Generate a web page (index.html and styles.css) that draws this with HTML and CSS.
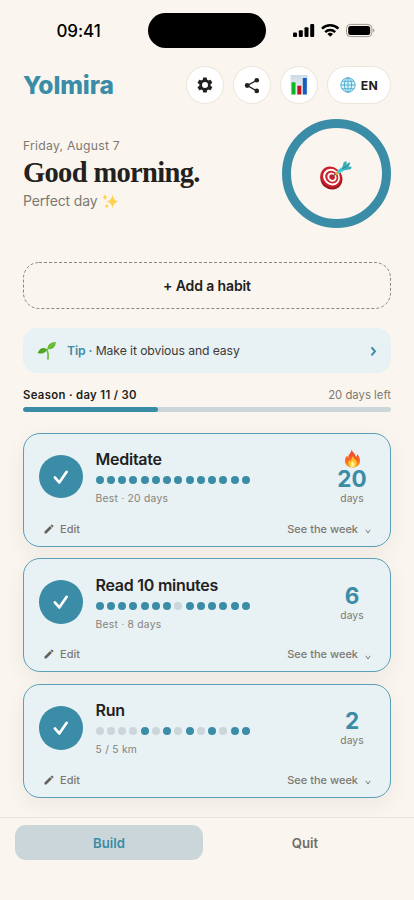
FILE: index.html
```html
<!DOCTYPE html>
<html lang="en">
<head>
<meta charset="utf-8">
<title>Yolmira</title>
<link rel="stylesheet" href="styles.css">
</head>
<body>
<svg class="defs" aria-hidden="true">
  <symbol id="check" viewBox="0 0 44 44"><path d="M16 22.700 20.500 27.800 28 17" fill="none" stroke="#fff" stroke-width="2.700" stroke-linecap="round" stroke-linejoin="round"/></symbol>
  <symbol id="pencil" viewBox="0 0 24 24"><path d="M3 17.2V21h3.8L17.8 9.9l-3.7-3.7L3 17.2zM20.7 7a1 1 0 0 0 0-1.4l-2.3-2.3a1 1 0 0 0-1.4 0l-1.8 1.8 3.7 3.7L20.7 7z" fill="currentColor"/></symbol>
  <symbol id="down" viewBox="0 0 6 5"><path d="M.8.8 3 4 5.2.8" fill="none" stroke="currentColor" stroke-width="1"/></symbol>
</svg>
<div class="status">
  <span class="time">09:41</span>
  <span class="island"></span>
  <svg class="signals" viewBox="0 0 82 16">
    <rect x="0" y="9.5" width="4" height="4.5" rx="1.1"/><rect x="5.8" y="7.2" width="4" height="6.8" rx="1.1"/><rect x="11.5" y="4.2" width="4" height="9.8" rx="1.1"/><rect x="17.2" y="1" width="4" height="13" rx="1.1"/>
    <g fill="none" stroke="#000" stroke-width="2.5"><path d="M29 5.7a11.7 11.7 0 0 1 16.4 0"/><path d="M32.2 9.1a7.2 7.2 0 0 1 10 0"/></g>
    <path d="M37.2 13.7 34.4 11a4 4 0 0 1 5.6 0z"/>
    <rect x="53.5" y="1.4" width="25.4" height="12.2" rx="4" fill="none" stroke="#999790"/>
    <rect x="55.2" y="3.1" width="22" height="8.8" rx="2.5"/><path d="M80.2 5.6c1.8.5 1.8 3.3 0 3.8z" fill="#999790"/>
  </svg>
</div>
<header class="top">
  <h1 class="brand">Yolmira</h1>
  <div class="actions">
    <button class="btn" aria-label="Settings"><svg width="18" height="18" viewBox="0 0 24 24"><path fill="#222120" fill-rule="evenodd" d="M19.4 13a7.800 7.800 0 0 0 0-2l2.100-1.600a.5.5 0 0 0 .1-.7l-2-3.400a.5.5 0 0 0-.6-.2l-2.500 1a7.300 7.300 0 0 0-1.700-1l-.4-2.600a.5.5 0 0 0-.5-.5h-4a.5.5 0 0 0-.5.5L9 5.100a7.300 7.300 0 0 0-1.700 1l-2.500-1a.5.5 0 0 0-.6.2l-2 3.400a.5.5 0 0 0 .1.700L4.500 11a7.800 7.800 0 0 0 0 2l-2.200 1.600a.5.5 0 0 0-.1.700l2 3.400c.1.200.4.300.6.200l2.500-1a7.300 7.300 0 0 0 1.700 1l.4 2.600c0 .3.200.5.500.5h4c.3 0 .5-.2.500-.5l.4-2.600a7.300 7.300 0 0 0 1.700-1l2.500 1c.2.100.5 0 .6-.2l2-3.400a.5.5 0 0 0-.1-.700zM12 16a4 4 0 1 1 0-8 4 4 0 0 1 0 8z"/></svg></button>
    <button class="btn" aria-label="Share"><svg width="16" height="17" viewBox="0 0 16 17"><path d="M13 3.200 3.300 8.500 13 14" fill="none" stroke="#222120" stroke-width="1.400"/><g fill="#222120"><circle cx="12.800" cy="3.200" r="2.300"/><circle cx="3.200" cy="8.500" r="2.400"/><circle cx="12.800" cy="13.900" r="2.300"/></g></svg></button>
    <button class="btn" aria-label="Statistics"><svg width="18" height="20" viewBox="0 0 18 20"><defs><linearGradient id="paper" x2="0" y2="1"><stop stop-color="#cbdbe8"/><stop offset="1" stop-color="#f2f5f8"/></linearGradient></defs><path d="M.5 0h17v20H.5z" fill="url(#paper)"/><path d="M.5 5h17M.5 10h17M.5 15h17M6 0v20M12 0v20" stroke="#dce5ec" stroke-width=".6"/><path d="M1.500 7.300h4v12.200h-4z" fill="#0fb526"/><path d="M7.300 10.700h4v8.800h-4z" fill="#bd1721"/><path d="M12.800 3h4v16.500h-4z" fill="#155dbb"/></svg></button>
    <button class="btn lang"><svg width="16" height="16" viewBox="0 0 16 16" fill="none" stroke="#39a5cb" stroke-width=".8"><circle cx="8" cy="8" r="7.200" fill="#d9f2fa"/><ellipse cx="8" cy="8" rx="3.600" ry="7.200"/><path d="M8 .8v14.400M.8 8h14.400M2 4.300h12M2 11.700h12"/></svg>EN</button>
  </div>
</header>
<section class="hero">
  <div>
    <div class="date">Friday, August 7</div>
    <h2 class="greet">Good morning.</h2>
    <div class="mood">Perfect day <svg width="17" height="17" viewBox="0 0 17 17" fill="#ffd34f"><path d="M10.500 1.500q.8 6.200 6 7-5.200.8-6 7-.8-6.200-6-7 5.200-.8 6-7zM3 .8q.4 3 2.500 3.400Q3.400 4.700 3 7.600 2.600 4.700.5 4.200 2.600 3.800 3 .8zM4.800 10.500q.3 2.300 2.100 2.700-1.800.3-2.100 2.600-.3-2.300-2.100-2.600 1.800-.4 2.100-2.700z"/></svg></div>
  </div>
  <div class="ring"><svg width="33" height="29" viewBox="0 0 32 28"><ellipse cx="12" cy="17" rx="11" ry="10.300" fill="#96151c" transform="rotate(40 12 17)"/><g transform="rotate(40 12 15.500)"><ellipse cx="11.800" cy="15.700" rx="10.800" ry="9.700" fill="#c91f29"/><ellipse cx="12.100" cy="15.500" rx="8.600" ry="7.600" fill="#fff"/><ellipse cx="12.300" cy="15.300" rx="6.700" ry="5.900" fill="#cf2832"/><ellipse cx="12.500" cy="15.200" rx="4.700" ry="4.100" fill="#fff"/><ellipse cx="12.600" cy="15.100" rx="2.800" ry="2.500" fill="#c91f29"/></g><path d="m13 15 5-4" stroke="#5b5148" stroke-width="1.200"/><path d="m15.500 11.800 3-2.200 1.500 2.300-3.300 2z" fill="#e5a52d"/><path d="m17.500 9.200 6-4 2.200 3-6.600 4.300z" fill="#43c8d8"/><path d="m22.500 6.500 1.500-5.700 2.700-.7.200 3 2.500-2.200 1 1.800-2 2.400 3.300.6-.9 2.300-6.600 1z" fill="#3badba"/><path d="m22 7.700 7-4" stroke="#26808d" stroke-width=".8"/></svg></div>
</section>
<main class="content">
  <button class="add"><svg viewBox="0 0 368 47"><rect x=".5" y=".5" width="367" height="46" rx="15.500" fill="none" stroke="#8a8880" stroke-dasharray="3 2"/></svg><span>+ Add a habit</span></button>
  <div class="tip">
    <svg width="20" height="19" viewBox="0 0 20 19"><path d="M11 18Q11.500 12 10 8.500" fill="none" stroke="#72bd35" stroke-width="1.700" stroke-linecap="round"/><path d="M10.200 8.500Q10.500 1 19 1q-.6 7.500-8.800 7.500z" fill="#5eb526"/><path d="M10.200 8.500Q4 4.500.7 12q6.300 2.200 9.500-3.500z" fill="#4fa51d"/><path d="M10.400 8.500Q13 5 18 2" stroke="#8fd44c" fill="none" stroke-width=".8"/></svg>
    <span class="tip-text"><b>Tip ·</b> Make it obvious and easy</span>
    <svg class="next" width="7" height="10" viewBox="0 0 7 10"><path d="M1.500 1.300 5 5.300 1.500 9.300" fill="none" stroke="#3b8ca6" stroke-width="2"/></svg>
  </div>
  <div class="season"><b>Season · day 11 / 30</b><span>20 days left</span></div>
  <div class="bar"><i></i></div>
  <div class="cards">
    <article class="card">
      <div class="row"><svg class="done"><use href="#check"/></svg>
        <div class="info"><h3>Meditate</h3><div class="dots"><i></i><i></i><i></i><i></i><i></i><i></i><i></i><i></i><i></i><i></i><i></i><i></i><i></i><i></i></div><p>Best · 20 days</p></div>
        <div class="streak"><svg class="fire" width="17" height="19" viewBox="0 0 16 18"><defs><linearGradient id="flame" x2="0" y2="1"><stop stop-color="#ef442b"/><stop offset=".55" stop-color="#fa6324"/><stop offset="1" stop-color="#ff9a22"/></linearGradient></defs><path d="M7 .5c1 2.800 3.700 3.900 4.400 7 .9-.7 1-1.800.8-2.800 2 2 2.900 4.200 2.900 6.600 0 3.800-2.900 6.200-7.100 6.200s-7.100-2.300-7.100-6.100c0-2 .8-3.700 2-5.200.1 1 .4 1.700 1.100 2.100C3.800 4.700 7.300 3.600 7 .5z" fill="url(#flame)"/><path d="M8.300 6.500c.3 2.600 3.700 3.800 3.700 7.100 0 2.400-1.600 3.700-4 3.700s-4-1.300-4-3.500c0-1.600.7-2.500 1.300-3.300.3.700.6 1 1.100 1.200 0-2.400 1.700-3 1.900-5.200z" fill="#ffc72d"/><path d="M8.300 11.500c2 1.800 2 5.300-.3 5.500-2.400-.1-2.200-3.300.3-5.500z" fill="#fff39a"/></svg><strong>20</strong><span>days</span></div>
      </div>
      <div class="foot"><span class="edit"><svg><use href="#pencil"/></svg>Edit</span><span class="week">See the week<svg><use href="#down"/></svg></span></div>
    </article>
    <article class="card">
      <div class="row"><svg class="done"><use href="#check"/></svg>
        <div class="info"><h3>Read 10 minutes</h3><div class="dots"><i></i><i></i><i></i><i></i><i></i><i></i><i></i><i class="off"></i><i></i><i></i><i></i><i></i><i></i><i></i></div><p>Best · 8 days</p></div>
        <div class="streak"><strong>6</strong><span>days</span></div>
      </div>
      <div class="foot"><span class="edit"><svg><use href="#pencil"/></svg>Edit</span><span class="week">See the week<svg><use href="#down"/></svg></span></div>
    </article>
    <article class="card">
      <div class="row"><svg class="done"><use href="#check"/></svg>
        <div class="info"><h3>Run</h3><div class="dots"><i class="off"></i><i class="off"></i><i class="off"></i><i class="off"></i><i></i><i class="off"></i><i></i><i class="off"></i><i></i><i class="off"></i><i></i><i class="off"></i><i></i><i></i></div><p>5 / 5 km</p></div>
        <div class="streak"><strong>2</strong><span>days</span></div>
      </div>
      <div class="foot"><span class="edit"><svg><use href="#pencil"/></svg>Edit</span><span class="week">See the week<svg><use href="#down"/></svg></span></div>
    </article>
  </div>
</main>
<nav class="tabs"><button class="on">Build</button><button>Quit</button></nav>
</body>
</html>
```
FILE: styles.css
```css
* { box-sizing: border-box; margin: 0; padding: 0; }
body {
  height: 900px; overflow: hidden; display: flex; flex-direction: column;
  background: #faf6ef; color: #222120;
  font-family: Inter, "Liberation Sans", sans-serif;
}
button { font: inherit; color: inherit; border: 0; background: none; }
svg { flex: none; }
.defs { position: absolute; width: 0; height: 0; }

.status { height: 66px; padding-top: 13px; display: flex; align-items: flex-start; color: #000; }
.time { width: 148px; padding-left: 56.5px; font-size: 17px; font-weight: 500; line-height: 36px; letter-spacing: -.1px; }
.island { width: 118px; height: 35px; border-radius: 18px; background: #000; }
.signals { width: 82px; height: 16px; margin: 10px 0 0 27px; }

.top { height: 38px; padding: 0 23px; display: flex; justify-content: space-between; align-items: center; }
.brand { font-size: 24.5px; font-weight: 800; letter-spacing: -.1px; color: #3b8ca6; }
.actions { display: flex; gap: 9px; }
.btn {
  width: 38px; height: 38px; border-radius: 19px; background: #fff; border: 1px solid #ece6d8;
  display: flex; align-items: center; justify-content: center;
}
.lang { width: 64px; gap: 5px; font-size: 12.2px; font-weight: 700; letter-spacing: .3px; }

.hero { height: 158px; padding: 15px 23px 0; display: flex; justify-content: space-between; align-items: flex-start; }
.date { margin-top: 19px; font-size: 12.2px; line-height: 16px; letter-spacing: .25px; color: #7c7972; }
.greet { font-family: "Liberation Serif", serif; font-size: 28.5px; font-weight: 700; line-height: 34px; letter-spacing: -.65px; margin-top: 2px; white-space: nowrap; }
.mood { display: flex; align-items: center; gap: 5px; margin-top: 2px; font-size: 14px; line-height: 18px; letter-spacing: -.15px; color: #7c7972; }
.ring {
  width: 109px; height: 109px; border: 9.5px solid #3b8ca6; border-radius: 50%;
  display: flex; align-items: center; justify-content: center;
}
.ring svg { margin: 3px 2px 0 0; }

.content { padding: 0 23px; }
.add { display: grid; place-items: center; width: 368px; height: 47px; font-size: 14px; font-weight: 600; letter-spacing: -.12px; }
.add > * { grid-area: 1 / 1; }
.add svg { width: 368px; height: 47px; }
.tip { display: flex; align-items: center; height: 45px; margin-top: 19px; padding: 0 14px; border-radius: 14px; background: #e8f1f4; font-size: 12.2px; letter-spacing: -.09px; }
.tip-text { margin-left: 10px; color: #3c3b39; }
.tip b { font-weight: 600; color: #3b8ca6; }
.next { margin-left: auto; }
.season { display: flex; justify-content: space-between; margin-top: 14px; font-size: 11.3px; line-height: 16px; letter-spacing: .35px; }
.season b { font-weight: 600; }
.season span { color: #7c7972; letter-spacing: .02px; }
.bar { margin-top: 4px; height: 5px; border-radius: 3px; background: #cbd6da; overflow: hidden; }
.bar i { display: block; width: 135px; height: 100%; border-radius: 3px; background: #3b8ca6; }

.cards { display: flex; flex-direction: column; gap: 11.7px; margin-top: 20.5px; }
.card {
  height: 114px; border: 1px solid #5ba0b6; border-radius: 17px; background: #e8f1f4;
  box-shadow: 0 7px 22px rgba(40, 40, 35, .06);
}
.row { display: flex; height: 84px; padding: 0 15px; align-items: center; }
.done { width: 43.5px; height: 43.5px; border-radius: 50%; background: #3b8ca6; margin-top: 2px; }
.info { margin-left: 13px; padding-top: 3px; }
.info h3 { font-size: 16px; line-height: 20px; font-weight: 600; letter-spacing: -.25px; }
.dots { display: flex; gap: 3.27px; margin-top: 7px; }
.dots i { width: 8px; height: 8px; border-radius: 50%; background: #3b8ca6; }
.dots .off { background: #cbd6da; }
.info p { margin-top: 7px; font-size: 10.3px; line-height: 14px; letter-spacing: .25px; color: #85827b; }
.streak { margin-left: auto; width: 46px; display: flex; flex-direction: column; align-items: center; padding-top: 3px; }
.fire { margin: -1px 0; }
.streak strong { font-size: 22.500px; line-height: 23px; font-weight: 700; color: #3b8ca6; }
.streak span { font-size: 10.3px; line-height: 14px; margin-top: 1px; letter-spacing: .05px; color: #7c7972; }
.foot { display: flex; justify-content: space-between; padding: 2px 19px 0 19px; font-size: 11px; line-height: 18px; font-weight: 500; color: #7c7972; }
.foot span { display: flex; align-items: center; }
.edit svg { width: 12px; height: 12px; margin-right: 5px; color: #66615a; }
.week svg { width: 6px; height: 5px; margin: 6px 0 0 7px; }

.tabs { position: relative; margin-top: auto; flex: none; height: 83px; border-top: 1px solid #e8e4d9; background: #faf6ef; padding: 7px 15px; display: flex; gap: 8px; }
.tabs button { flex: 1; height: 35px; border-radius: 11px; font-size: 13.2px; font-weight: 600; color: #716d66; }
.tabs .on { background: #cbd6da; color: #3b8ca6; }
```
